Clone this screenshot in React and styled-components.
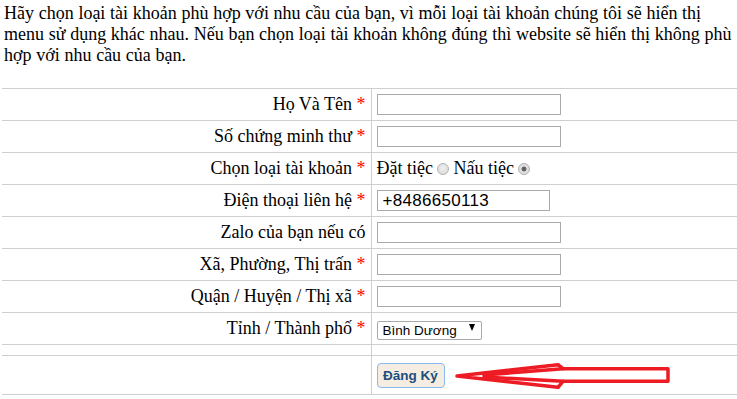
import React from "react";
import styled, { createGlobalStyle } from "styled-components";

const GlobalStyle = createGlobalStyle`
	body {
		margin: 0;
		background: #fff;
		font-family: "Liberation Serif", "Times New Roman", serif;
		color: #000;
	}
`;

const Page = styled.div`
	width: 737px;
	padding-left: 2px;
	box-sizing: border-box;
`;

const Intro = styled.p`
	margin: 0;
	padding: 3px 0 0 2px;
	font-size: 18px;
	line-height: 21px;
	word-spacing: 0.2px;
	height: 88px;
	box-sizing: border-box;
`;

const Table = styled.table`
	width: 100%;
	border-collapse: collapse;
	font-size: 18px;

	td {
		border-top: 1px solid #cfcfcf;
		padding: 0;
	}

	tr:last-child td {
		border-bottom: 1px solid #cfcfcf;
	}
`;

const Row = styled.tr`
	height: ${({ $h }) => $h || 32}px;
`;

const Label = styled.td`
	width: 369px;
	text-align: right;
	padding-right: 5px !important;
	border-right: 1px solid #cfcfcf;
	box-sizing: border-box;
	white-space: nowrap;
`;

const Req = styled.span`
	color: #ff0000;
`;

const Field = styled.td`
	padding-left: 5px !important;
	vertical-align: middle;
`;

const TextInput = styled.input`
	display: block;
	width: ${({ $w }) => $w || 184}px;
	height: 21px;
	box-sizing: border-box;
	border: 1px solid #a9a9a9;
	padding: 0 5px;
	font-family: "Liberation Sans", Arial, sans-serif;
	font-size: 17px;
	letter-spacing: 0.3px;
	color: #000;
	outline: none;
`;

const Radios = styled.div`
	display: flex;
	align-items: center;
	white-space: pre;
`;

const Radio = styled.input.attrs({ type: "radio" })`
	appearance: none;
	width: 12px;
	height: 12px;
	margin: 1px 4px 0 0;
	border-radius: 50%;
	border: 1px solid #b4b4b4;
	box-sizing: border-box;
	background: radial-gradient(circle at 50% 40%, #f0f0f0, #d6d6d6);

	&:checked {
		background: radial-gradient(circle, #5a5a5a 0, #6a6a6a 2.2px, #e4e4e4 2.8px, #d0d0d0 100%);
	}
`;

const SelectWrap = styled.div`
	position: relative;
	width: 105px;
	height: 19px;
`;

const Select = styled.select`
	appearance: none;
	width: 105px;
	height: 19px;
	box-sizing: border-box;
	border: 1px solid #a9a9a9;
	border-radius: 2px;
	background: #fff;
	padding: 0 0 0 5px;
	font-family: "Liberation Sans", Arial, sans-serif;
	font-size: 13.5px;
	color: #000;
	outline: none;
`;

const Caret = styled.span`
	position: absolute;
	right: 7px;
	top: 5px;
	width: 0;
	height: 0;
	border-left: 3.5px solid transparent;
	border-right: 3.5px solid transparent;
	border-top: 7px solid #000;
	pointer-events: none;
`;

const Actions = styled.div`
	display: flex;
	align-items: center;
	padding-top: 1px;
`;

const Submit = styled.button`
	width: 68px;
	height: 25px;
	box-sizing: border-box;
	border: 1px solid #86baf0;
	border-radius: 4px;
	background: #f5ece2;
	color: #1b4f7e;
	font-family: "Liberation Sans", Arial, sans-serif;
	font-weight: bold;
	font-size: 13.5px;
	padding: 0;
`;

const Arrow = styled.svg`
	margin-left: 9px;
	flex: none;
`;

const fields = [
	{ label: "Họ Và Tên", req: true },
	{ label: "Số chứng minh thư", req: true },
	{ label: "Chọn loại tài khoản", req: true, kind: "radio" },
	{ label: "Điện thoại liên hệ", req: true, value: "+8486650113", w: 173 },
	{ label: "Zalo của bạn nếu có" },
	{ label: "Xã, Phường, Thị trấn", req: true },
	{ label: "Quận / Huyện / Thị xã", req: true },
	{ label: "Tỉnh / Thành phố", req: true, kind: "select" },
];

const renderField = (f) => {
	if (f.kind === "radio") {
		return (
			<Radios>
				Đặt tiệc <Radio name="loai" />Nấu tiệc <Radio name="loai" defaultChecked />
			</Radios>
		);
	}
	if (f.kind === "select") {
		return (
			<SelectWrap>
				<Select defaultValue="bd">
					<option value="bd">Bình Dương</option>
				</Select>
				<Caret />
			</SelectWrap>
		);
	}
	return <TextInput $w={f.w} defaultValue={f.value || ""} />;
};

export default function App() {
	return (
		<Page>
			<GlobalStyle />
			<Intro>
				Hãy chọn loại tài khoản phù hợp với nhu cầu của bạn, vì mỗi loại tài khoản chúng tôi sẽ hiển thị
				menu sử dụng khác nhau. Nếu bạn chọn loại tài khoản không đúng thì website sẽ hiển thị không phù
				hợp với nhu cầu của bạn.
			</Intro>
			<Table>
				<tbody>
					{fields.map((f) => (
						<Row key={f.label}>
							<Label>
								{f.label}
								{f.req && <Req> *</Req>}
							</Label>
							<Field>{renderField(f)}</Field>
						</Row>
					))}
					<Row $h={11}>
						<Label />
						<Field />
					</Row>
					<Row $h={39}>
						<Label />
						<Field>
							<Actions>
								<Submit>Đăng Ký</Submit>
								<Arrow width="220" height="30" viewBox="0 0 220 30">
									<g fill="none" stroke="#ed1c24" strokeWidth="3.5" strokeLinejoin="round" strokeLinecap="round">
										<polygon points="3,15 104,3.7 109,7.7 214,7.7 214,20.3 109,20.3 104,26.3" />
										<polyline points="30,14 109,7.7" />
										<polyline points="30,16 109,20.3" />
									</g>
								</Arrow>
							</Actions>
						</Field>
					</Row>
				</tbody>
			</Table>
		</Page>
	);
}
